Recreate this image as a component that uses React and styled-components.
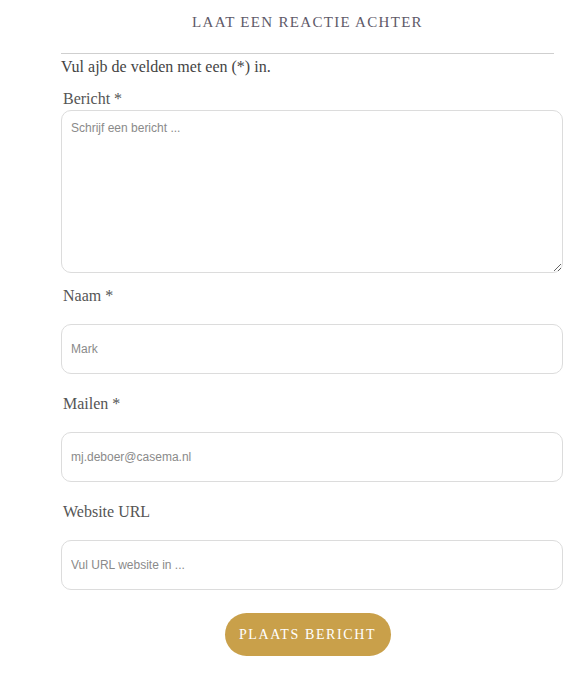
import React from "react";
import styled, { createGlobalStyle } from "styled-components";

const Global = createGlobalStyle`
  html, body { margin: 0; padding: 0; background: #fff; }
  body { font-family: "Liberation Serif", serif; }
`;

const Page = styled.div`
  width: 577px;
  padding: 12px 0 0 61px;
  box-sizing: border-box;
`;

const Title = styled.h3`
  width: 493px;
  margin: 0;
  text-align: center;
  font-family: "Liberation Serif", serif;
  font-weight: normal;
  font-size: 15px;
  line-height: 20px;
  letter-spacing: 1.3px;
  color: #5e5968;
  text-transform: uppercase;
`;

const Rule = styled.hr`
  width: 493px;
  margin: 21px 0 0 0;
  border: 0;
  border-top: 1px solid #cfcfcf;
  height: 0;
`;

const Intro = styled.p`
  margin: 3px 0 0 0;
  font-size: 16px;
  line-height: 20px;
  color: #444;
`;

const Form = styled.form`
  display: flex;
  flex-direction: column;
  width: 502px;
`;

const Label = styled.label`
  display: block;
  padding-left: 2px;
  margin-top: ${(p) => p.$top}px;
  margin-bottom: ${(p) => p.$bottom}px;
  font-size: 16px;
  line-height: 20px;
  color: #555;
`;

const fieldBase = `
  box-sizing: border-box;
  width: 502px;
  border: 1px solid #dcdcdc;
  border-radius: 10px;
  background: #fff;
  font-family: "Liberation Sans", Arial, sans-serif;
  font-size: 12px;
  color: #555;
  outline: none;
  padding: 0 9px;
  &::placeholder { color: #8a8a8a; opacity: 1; }
`;

const TextArea = styled.textarea`
  ${fieldBase}
  display: block;
  height: 163px;
  padding-top: 10px;
  resize: vertical;
`;

const Input = styled.input`
  ${fieldBase}
  display: block;
  height: 50px;
`;

const Actions = styled.div`
  width: 493px;
  display: flex;
  justify-content: center;
  margin-top: 23px;
`;

const Button = styled.button`
  height: 43px;
  width: 166px;
  border: 0;
  border-radius: 22px;
  background: #c9a04a;
  color: #fff;
  font-family: "Liberation Serif", serif;
  font-size: 14px;
  letter-spacing: 1.6px;
  text-transform: uppercase;
  cursor: pointer;
`;

export default function App() {
  return (
    <>
      <Global />
      <Page>
        <Title>Laat een reactie achter</Title>
        <Rule />
        <Intro>Vul ajb de velden met een (*) in.</Intro>
        <Form onSubmit={(e) => e.preventDefault()}>
          <Label $top={12} $bottom={1}>Bericht *</Label>
          <TextArea placeholder="Schrijf een bericht ..." />
          <Label $top={13} $bottom={18}>Naam *</Label>
          <Input placeholder="Mark" />
          <Label $top={20} $bottom={18}>Mailen *</Label>
          <Input placeholder="mj.deboer@casema.nl" />
          <Label $top={20} $bottom={18}>Website URL</Label>
          <Input placeholder="Vul URL website in ..." />
          <Actions>
            <Button type="submit">Plaats bericht</Button>
          </Actions>
        </Form>
      </Page>
    </>
  );
}
